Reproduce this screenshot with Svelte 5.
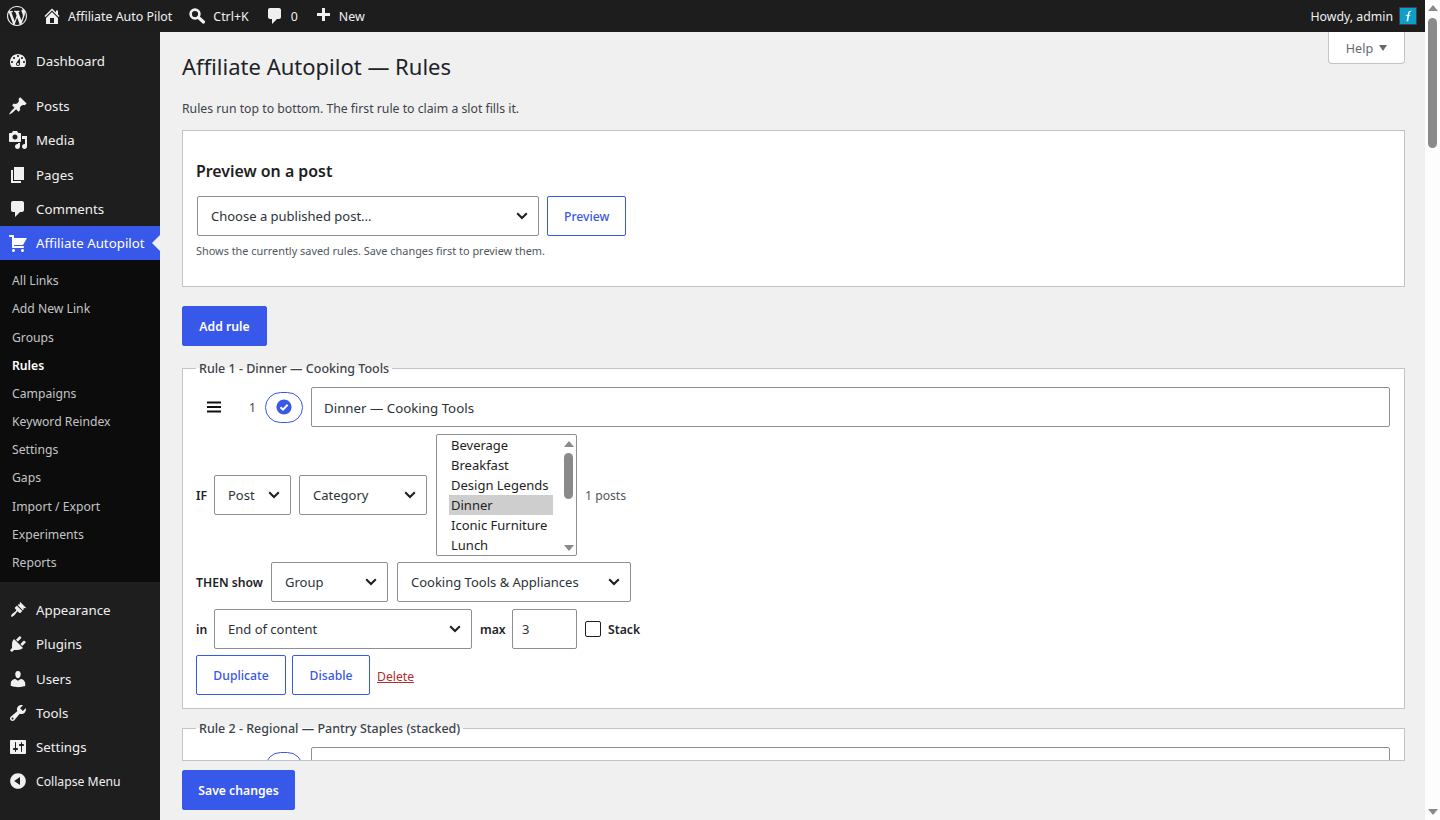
<script lang="ts">
  const icons: Record<string, string> = {
    dashboard: 'M3.76 16h12.48c1.1-1.37 1.76-3.11 1.76-5 0-4.42-3.58-8-8-8s-8 3.58-8 8c0 1.89.66 3.63 1.76 5zM10 4c.55 0 1 .45 1 1s-.45 1-1 1-1-.45-1-1 .45-1 1-1zM6 6c.55 0 1 .45 1 1s-.45 1-1 1-1-.45-1-1 .45-1 1-1zm8 0c.55 0 1 .45 1 1s-.45 1-1 1-1-.45-1-1 .45-1 1-1zm-5.37 5.55L12 7v6c0 1.1-.9 2-2 2s-2-.9-2-2c0-.57.24-1.08.63-1.45zM4 10c.55 0 1 .45 1 1s-.45 1-1 1-1-.45-1-1 .45-1 1-1zm12 0c.55 0 1 .45 1 1s-.45 1-1 1-1-.45-1-1 .45-1 1-1zm-5 3c0-.55-.45-1-1-1s-1 .45-1 1 .45 1 1 1 1-.45 1-1z',
    posts: 'M10.44 3.02l1.82-1.82 6.36 6.35-1.83 1.82c-1.05-.68-2.48-.57-3.41.36l-.75.75c-.92.93-1.04 2.35-.35 3.41l-1.83 1.82-2.41-2.41-2.8 2.79c-.42.42-3.38 2.71-3.8 2.29s1.86-3.39 2.28-3.81l2.79-2.79L4.1 9.36l1.83-1.82c1.05.69 2.48.57 3.4-.36l.75-.75c.93-.92 1.05-2.35.36-3.41z',
    media: 'M13 11V4c0-.55-.45-1-1-1h-1.67L9 1H5L3.67 3H2c-.55 0-1 .45-1 1v7c0 .55.45 1 1 1h10c.55 0 1-.45 1-1zM7 4.5c1.38 0 2.5 1.12 2.5 2.5S8.38 9.5 7 9.5 4.5 8.38 4.5 7 5.62 4.5 7 4.5zM14 6h5v10.5c0 1.38-1.12 2.5-2.5 2.5S14 17.88 14 16.5s1.12-2.5 2.5-2.5c.17 0 .34.02.5.05V9h-3V6zm-4 8.05V13h2v3.5c0 1.38-1.12 2.5-2.5 2.5S7 17.88 7 16.5 8.12 14 9.5 14c.17 0 .34.02.5.05z',
    pages: 'M6 15V2h10v13H6zm-1 1h8v2H3V5h2v11z',
    comment: 'M5 2h9c1.1 0 2 .9 2 2v7c0 1.1-.9 2-2 2h-2l-5 5v-5H5c-1.1 0-2-.9-2-2V4c0-1.1.9-2 2-2z',
    cart: 'M6 13h9c.55 0 1 .45 1 1s-.45 1-1 1H5c-.55 0-1-.45-1-1V4H2c-.55 0-1-.45-1-1s.45-1 1-1h3c.55 0 1 .45 1 1v2h13l-4 7H6v1zm-.5 3c.83 0 1.5.67 1.5 1.5S6.33 19 5.5 19 4 18.33 4 17.5 4.67 16 5.5 16zm9 0c.83 0 1.5.67 1.5 1.5s-.67 1.5-1.5 1.5-1.5-.67-1.5-1.5.67-1.5 1.5-1.5z',
    appearance: 'M12.2 2 18.2 8c-.9.5-1.8.3-2.6-.2.2 1 .1 1.9-.6 2.6L9.6 5c.7-.7 1.6-.8 2.6-.6-.5-.8-.7-1.6 0-2.4zM8.9 5.7l5.4 5.4-1.7 1.7c-.4.4-1 .4-1.4 0l-.9-.9c-.4-.4-1-.4-1.4 0-.6.6-1.1 1.5-1.7 2.3-.3.4-.6.8-.9 1.1-1 1-2.6 1.9-3.1 1.4s.4-2.1 1.4-3.1c.3-.3.7-.6 1.1-.9.8-.6 1.7-1.1 2.3-1.7.4-.4.4-1 0-1.4l-.9-.9c-.4-.4-.4-1 0-1.4z',
    plugins: 'M13.11 4.36L9.87 7.6 8 5.73l3.24-3.24c.35-.34 1.05-.2 1.56.32.52.51.66 1.21.31 1.55zm-8 1.77l.91-1.12 9.01 9.01-1.19.84c-.71.71-2.63 1.16-3.82 1.16H6.14L4.9 17.26c-.59.59-1.54.59-2.12 0-.59-.58-.59-1.53 0-2.12l1.24-1.24v-3.88c0-1.13.4-3.19 1.09-3.89zm7.26 3.97l3.24-3.24c.34-.35 1.04-.21 1.55.31.52.51.66 1.21.31 1.55l-3.24 3.25z',
    users: 'M10 9.25c-2.27 0-2.73-3.44-2.73-3.44C7 4.02 7.82 2 9.97 2c2.16 0 2.98 2.02 2.71 3.81 0 0-.41 3.44-2.68 3.44zm0 2.57L12.72 10c2.39 0 4.52 2.33 4.52 4.53v2.49s-3.65 1.13-7.24 1.13c-3.65 0-7.24-1.13-7.24-1.13v-2.49c0-2.25 1.94-4.48 4.47-4.48z',
    tools: 'M16.68 9.77c-1.34 1.34-3.3 1.67-4.95.99l-5.41 6.52c-.99.99-2.59.99-3.58 0s-.99-2.59 0-3.57l6.52-5.42c-.68-1.65-.35-3.61.99-4.95 1.28-1.28 3.12-1.62 4.72-1.06l-2.89 2.89 2.82 2.82 2.86-2.87c.53 1.58.18 3.39-1.08 4.65zM3.81 16.21c.4.39 1.04.39 1.43 0 .4-.4.4-1.04 0-1.43-.39-.4-1.03-.4-1.43 0-.39.39-.39 1.03 0 1.43z',
    settings: 'M18 16V4c0-.55-.45-1-1-1H3c-.55 0-1 .45-1 1v12c0 .55.45 1 1 1h14c.55 0 1-.45 1-1zM8 11h1c.55 0 1 .45 1 1s-.45 1-1 1H8v1.5c0 .28-.22.5-.5.5s-.5-.22-.5-.5V13H6c-.55 0-1-.45-1-1s.45-1 1-1h1V5.5c0-.28.22-.5.5-.5s.5.22.5.5V11zm5-2h-1c-.55 0-1-.45-1-1s.45-1 1-1h1V5.5c0-.28.22-.5.5-.5s.5.22.5.5V7h1c.55 0 1 .45 1 1s-.45 1-1 1h-1v5.5c0 .28-.22.5-.5.5s-.5-.22-.5-.5V9z',
    collapse: 'M10 2.16c4.33 0 7.84 3.51 7.84 7.84s-3.51 7.84-7.84 7.84S2.16 14.33 2.16 10 5.71 2.16 10 2.16zm2 11.72V6.12L6.18 9.97z',
    wp: 'M20 10c0-5.51-4.49-10-10-10C4.48 0 0 4.49 0 10c0 5.52 4.48 10 10 10 5.51 0 10-4.48 10-10zM7.78 15.37L4.37 6.22c.55-.02 1.17-.08 1.17-.08.5-.06.44-1.13-.06-1.11 0 0-1.45.11-2.37.11-.18 0-.37 0-.58-.01C4.12 2.69 6.87 1.11 10 1.11c2.33 0 4.45.87 6.05 2.34-.68-.11-1.65.39-1.65 1.58 0 .74.45 1.36.9 2.1.35.61.55 1.36.55 2.46 0 1.49-1.4 5-1.4 5l-3.03-8.37c.54-.02.82-.17.82-.17.5-.05.44-1.25-.06-1.22 0 0-1.44.12-2.38.12-.87 0-2.33-.12-2.33-.12-.5-.03-.56 1.2-.06 1.22l.92.08 1.26 3.41zM17.41 10c.24-.64.74-1.87.43-4.25.7 1.29 1.05 2.71 1.05 4.25 0 3.29-1.73 6.24-4.4 7.78.97-2.59 1.94-5.2 2.92-7.78zM6.1 18.09C3.12 16.65 1.11 13.53 1.11 10c0-1.3.23-2.48.72-3.59C3.25 10.3 4.67 14.2 6.1 18.09zm4.03-6.63l2.58 6.98c-.86.29-1.76.45-2.71.45-.79 0-1.57-.11-2.29-.33.81-2.38 1.62-4.74 2.42-7.1z',
    home: 'M16 8.5l1.53 1.53-1.06 1.06L10 4.62l-6.47 6.47-1.06-1.06L10 2.5l4 4v-2h2v4zm-6-2.46l6 5.99V18H4v-5.97zM12 17v-5H8v5h4z',
    plus: 'M17 7v3h-5v5H9v-5H4V7h5V2h3v5h5z'
  }

  const topMenu = [
    { label: 'Dashboard', icon: 'dashboard' }
  ]
  const contentMenu = [
    { label: 'Posts', icon: 'posts' },
    { label: 'Media', icon: 'media' },
    { label: 'Pages', icon: 'pages' },
    { label: 'Comments', icon: 'comment' }
  ]
  const subMenu = ['All Links', 'Add New Link', 'Groups', 'Rules', 'Campaigns', 'Keyword Reindex', 'Settings', 'Gaps', 'Import / Export', 'Experiments', 'Reports']
  const adminMenu = [
    { label: 'Appearance', icon: 'appearance' },
    { label: 'Plugins', icon: 'plugins' },
    { label: 'Users', icon: 'users' },
    { label: 'Tools', icon: 'tools' },
    { label: 'Settings', icon: 'settings' }
  ]
  const categories = ['Beverage', 'Breakfast', 'Design Legends', 'Dinner', 'Iconic Furniture', 'Lunch']
</script>

{#snippet icon(name: string, size = 20)}
  <svg class="icon" width={size} height={size} viewBox="0 0 20 20" aria-hidden="true"><path d={icons[name]} fill="currentColor" /></svg>
{/snippet}

{#snippet menuItem(item: { label: string, icon: string })}
  <li class="menu-item">{@render icon(item.icon)}<span>{item.label}</span></li>
{/snippet}

{#snippet chevron()}
  <svg class="chev" width="12" height="8" viewBox="0 0 12 8" aria-hidden="true"><path d="M1.2 1.2 6 6l4.8-4.8" fill="none" stroke="#1e1e1e" stroke-width="2" /></svg>
{/snippet}

<div class="page">
  <header class="adminbar">
    <div class="bar-left">
      <span class="bar-logo">{@render icon('wp', 20)}</span>
      <span class="bar-item home">{@render icon('home', 20)}Affiliate Auto Pilot</span>
      <span class="bar-item">
        <svg class="icon" width="20" height="20" viewBox="0 0 20 20" aria-hidden="true"><circle cx="8" cy="8" r="4.4" fill="none" stroke="currentColor" stroke-width="2.6" /><path d="M11.5 11.5 16.5 16" stroke="currentColor" stroke-width="3.2" stroke-linecap="round" /></svg>
        Ctrl+K
      </span>
      <span class="bar-item comments">{@render icon('comment', 20)}0</span>
      <span class="bar-item">{@render icon('plus', 20)}New</span>
    </div>
    <div class="bar-right">
      <span>Howdy, admin</span>
      <svg class="avatar" width="18" height="18" viewBox="0 0 18 18" aria-hidden="true">
        <rect x=".5" y=".5" width="17" height="17" fill="#0d9fc9" stroke="#3c434a" />
        <path d="M13 3.5 9.6 4.4 8.8 7.6 6 8.4 8.4 9 7.5 14.2 9.2 14.2 10 9 12 8.4 10.2 8 10.6 5.6z" fill="#fff" />
      </svg>
    </div>
  </header>

  <div class="body">
    <nav class="sidebar">
      <ul class="group first">
        {#each topMenu as item}{@render menuItem(item)}{/each}
      </ul>
      <ul class="group">
        {#each contentMenu as item}{@render menuItem(item)}{/each}
        <li class="menu-item current">{@render icon('cart')}<span>Affiliate Autopilot</span></li>
      </ul>
      <ul class="submenu">
        {#each subMenu as label}
          <li class:active={label === 'Rules'}>{label}</li>
        {/each}
      </ul>
      <ul class="group">
        {#each adminMenu as item}{@render menuItem(item)}{/each}
        <li class="menu-item collapse">{@render icon('collapse')}<span>Collapse Menu</span></li>
      </ul>
    </nav>

    <main class="content">
      <button class="help">Help <span class="tri"></span></button>
      <h1>Affiliate Autopilot — Rules</h1>
      <p class="lead">Rules run top to bottom. The first rule to claim a slot fills it.</p>

      <section class="card">
        <h2>Preview on a post</h2>
        <div class="row">
          <div class="select w-post-pick">Choose a published post...{@render chevron()}</div>
          <button class="btn outline">Preview</button>
        </div>
        <p class="hint">Shows the currently saved rules. Save changes first to preview them.</p>
      </section>

      <button class="btn primary add">Add rule</button>

      <div class="rules">
        <fieldset class="rule">
          <legend>Rule 1 - Dinner — Cooking Tools</legend>
          <div class="row">
            <svg class="drag" width="24" height="24" viewBox="0 0 24 24" aria-hidden="true"><path d="M5 6.5h14v2H5zM5 11h14v2H5zM5 15.5h14v2H5z" fill="#111" /></svg>
            <span class="num">1</span>
            <span class="toggle">
              <svg width="20" height="20" viewBox="0 0 20 20" aria-hidden="true"><circle cx="10" cy="10" r="7.6" fill="#3858e9" /><path d="M6.4 10.2 9 12.6 13.6 7.8" fill="none" stroke="#fff" stroke-width="2" /></svg>
            </span>
            <div class="input grow title">Dinner — Cooking Tools</div>
          </div>
          <div class="row tight">
            <span class="lbl short">IF</span>
            <div class="select w-post">Post{@render chevron()}</div>
            <div class="select w-cat">Category{@render chevron()}</div>
            <div class="multi">
              <ul>
                {#each categories as c}
                  <li class:sel={c === 'Dinner'}>{c}</li>
                {/each}
              </ul>
              <div class="sb">
                <span class="arr up"></span>
                <span class="thumb"></span>
                <span class="arr down"></span>
              </div>
            </div>
            <span class="count">1 posts</span>
          </div>
          <div class="row then">
            <span class="lbl">THEN show</span>
            <div class="select w-group">Group{@render chevron()}</div>
            <div class="select w-tools">Cooking Tools &amp; Appliances{@render chevron()}</div>
          </div>
          <div class="row tight">
            <span class="lbl short">in</span>
            <div class="select w-slot">End of content{@render chevron()}</div>
            <span class="lbl max">max</span>
            <div class="input w-max">3</div>
            <span class="check"></span>
            <span class="lbl stack">Stack</span>
          </div>
          <div class="row actions">
            <button class="btn outline dup">Duplicate</button>
            <button class="btn outline dis">Disable</button>
            <a class="delete" href="#delete">Delete</a>
          </div>
        </fieldset>

        <fieldset class="rule clipped">
          <legend>Rule 2 - Regional — Pantry Staples (stacked)</legend>
          <div class="row">
            <span class="spacer"></span>
            <span class="toggle"></span>
            <div class="input grow"></div>
          </div>
        </fieldset>
      </div>

      <button class="btn primary save">Save changes</button>
    </main>

    <div class="scrollbar">
      <span class="arr up"></span>
      <span class="thumb"></span>
      <span class="gap"></span>
      <span class="arr down"></span>
    </div>
  </div>
</div>

<style>
  :global(body) {
    margin: 0;
    overflow: hidden;
    background: #f0f0f0;
  }

  .page {
    width: 1440px;
    height: 820px;
    display: flex;
    flex-direction: column;
    overflow: hidden;
    font-family: "Noto Sans", "Open Sans", sans-serif;
    font-size: 13px;
    color: #1e1e1e;
  }

  ul {
    list-style: none;
    margin: 0;
    padding: 0;
  }

  button {
    font: inherit;
  }

  /* admin bar */
  .adminbar {
    height: 32px;
    flex: none;
    display: flex;
    justify-content: space-between;
    align-items: center;
    background: #1d1d1d;
    color: #f0f0f1;
    font-size: 12.4px;
    padding-right: 23px;
  }

  .bar-left {
    display: flex;
    align-items: center;
    padding-left: 7px;
  }

  .bar-logo {
    display: flex;
    width: 35px;
  }

  .bar-item {
    display: flex;
    align-items: center;
    gap: 6px;
    margin-right: 16px;
  }

  .bar-item.home, .bar-item.comments {
    margin-right: 15px;
  }

  .bar-right {
    display: flex;
    align-items: center;
    gap: 6px;
    font-size: 12.3px;
  }

  .avatar {
    display: block;
  }

  .icon {
    flex: none;
    display: block;
  }

  .body {
    flex: 1;
    min-height: 0;
    display: flex;
  }

  /* sidebar */
  .sidebar {
    width: 160px;
    flex: none;
    background: #1e1e1e;
    color: #f0f0f1;
    font-size: 13.3px;
    padding-top: 12px;
  }

  .group {
    margin-top: 11px;
  }

  .group.first {
    margin-top: 0;
  }

  .menu-item {
    height: 34.2px;
    display: flex;
    align-items: center;
    gap: 8px;
    padding-left: 8px;
    box-sizing: border-box;
    position: relative;
  }

  .menu-item.collapse {
    font-size: 12.2px;
  }

  .menu-item.current {
    background: #3858e9;
    color: #fff;
  }

  .menu-item.current::after {
    content: '';
    position: absolute;
    right: 0;
    top: 50%;
    margin-top: -8px;
    border: 8px solid transparent;
    border-right-color: #f0f0f0;
    border-left-width: 0;
  }

  .submenu {
    background: #0c0c0c;
    padding: 7px 0 5px;
    color: #c3c4c7;
    font-size: 12.2px;
  }

  .submenu li {
    height: 28.2px;
    line-height: 28.2px;
    padding-left: 12px;
  }

  .submenu li.active {
    color: #fff;
    font-weight: 600;
  }

  /* content */
  .content {
    flex: 1;
    min-width: 0;
    position: relative;
    padding: 0 20px 0 22px;
  }

  .help {
    position: absolute;
    top: 0;
    right: 20px;
    width: 77px;
    height: 32px;
    background: #fff;
    border: 1px solid #c3c4c7;
    border-top: none;
    border-radius: 0 0 4px 4px;
    color: #646970;
    font-size: 12.6px;
    display: flex;
    align-items: center;
    justify-content: center;
    gap: 6px;
    padding: 1px 0 0;
  }

  .tri {
    border: 4.5px solid transparent;
    border-top: 6px solid #646970;
    border-bottom: none;
  }

  h1 {
    margin: 0;
    padding-top: 18px;
    font-size: 22px;
    font-weight: 400;
    line-height: 32px;
    color: #1d2327;
  }

  .lead {
    margin: 18px 0 0;
    line-height: 18px;
    font-size: 12.25px;
    color: #3c434a;
  }

  .card {
    margin-top: 12px;
    height: 157px;
    box-sizing: border-box;
    background: #fff;
    border: 1px solid #c3c4c7;
    padding: 28px 13px 0;
  }

  h2 {
    margin: 0 0 13px;
    font-size: 15.9px;
    font-weight: 600;
    line-height: 24px;
    color: #1e1e1e;
  }

  .row {
    display: flex;
    align-items: center;
    gap: 8px;
  }

  .hint {
    margin: 7px 0 0;
    font-size: 10.9px;
    line-height: 16px;
    color: #50575e;
  }

  .btn {
    height: 40px;
    box-sizing: border-box;
    border-radius: 2px;
    padding: 0 16px;
    font-size: 12.2px;
    font-weight: 500;
    border: 1px solid #3858e9;
    white-space: nowrap;
  }

  .btn.primary {
    background: #3858e9;
    color: #fff;
    font-weight: 600;
  }

  .btn.outline {
    background: #fff;
    color: #3858e9;
  }

  .add {
    display: block;
    width: 85px;
    padding: 0;
    margin-top: 19px;
  }

  .select, .input {
    height: 40px;
    box-sizing: border-box;
    border: 1px solid #8c8f94;
    border-radius: 2px;
    background: #fff;
    display: flex;
    align-items: center;
    padding: 0 10px 0 13px;
    font-size: 13px;
    color: #2c3338;
  }

  .select {
    justify-content: space-between;
  }

  .w-post-pick { width: 342px; margin-left: 1px; }
  .w-post { width: 77px; }
  .w-cat { width: 128px; }
  .w-group { width: 117px; }
  .w-tools { width: 234px; margin-left: 1px; }
  .w-slot { width: 258px; }
  .w-max { width: 65px; padding: 0 9px; }
  .grow { flex: 1; }

  .title {
    font-size: 13.3px;
    padding: 1px 12px 0;
  }

  .rules {
    margin-top: 14px;
  }

  .rule {
    margin: 0;
    background: #fff;
    border: 1px solid #c3c4c7;
    padding: 10px 14px 13px 13px;
    min-width: 0;
  }

  .rule + .rule {
    margin-top: 11px;
  }

  legend {
    margin-left: 0;
    padding: 0 3px;
    font-size: 12.5px;
    font-weight: 500;
    line-height: 17px;
    color: #3c434a;
  }

  .rule.clipped {
    height: 41px;
    box-sizing: border-box;
    overflow: hidden;
  }

  .spacer {
    width: 61px;
  }

  .drag {
    flex: none;
    margin-left: 6px;
  }

  .num {
    width: 23px;
    padding-left: 15px;
    font-size: 12px;
    color: #3c434a;
    box-sizing: border-box;
  }

  .toggle {
    flex: none;
    width: 38px;
    height: 31px;
    box-sizing: border-box;
    border: 1px solid #3858e9;
    border-radius: 16px;
    display: flex;
    align-items: center;
    justify-content: center;
    background: #fff;
  }

  .tight {
    margin-top: 7px;
  }

  .then {
    margin-top: 6px;
  }

  .lbl {
    font-size: 12.2px;
    font-weight: 600;
    color: #1d2327;
  }

  .lbl.short {
    width: 10px;
    white-space: nowrap;
  }

  .lbl.max {
    width: 24px;
    white-space: nowrap;
  }

  .multi {
    width: 141px;
    height: 122px;
    margin-left: 1px;
    box-sizing: border-box;
    border: 1px solid #8c8f94;
    border-radius: 2px;
    background: #fff;
    display: flex;
    padding-left: 12px;
    color: #1e1e1e;
  }

  .multi ul {
    width: 104px;
    flex: none;
  }

  .multi li {
    height: 20px;
    line-height: 20px;
    padding-left: 2px;
    font-size: 13px;
    white-space: nowrap;
  }

  .multi li.sel {
    background: #cecece;
  }

  .sb {
    flex: 1;
    display: flex;
    flex-direction: column;
    align-items: center;
    padding: 6px 0 4px 8px;
    box-sizing: border-box;
  }

  .sb .thumb {
    width: 9px;
    height: 46px;
    margin-top: 6px;
    border-radius: 5px;
    background: #8a8a8a;
  }

  .sb .down {
    margin-top: auto;
  }

  .arr {
    display: block;
    border-left: 5px solid transparent;
    border-right: 5px solid transparent;
  }

  .arr.up {
    border-bottom: 6px solid #8a8a8a;
  }

  .arr.down {
    border-top: 6px solid #8a8a8a;
  }

  .count {
    font-size: 12.2px;
    color: #50575e;
  }

  .check {
    width: 16px;
    height: 16px;
    box-sizing: border-box;
    border: 1px solid #1e1e1e;
    border-radius: 2px;
    background: #fff;
  }

  .stack {
    margin-left: -1px;
  }

  .actions {
    margin-top: 6px;
    gap: 6px;
  }

  .dup {
    width: 90px;
    padding: 0;
  }

  .dis {
    width: 78px;
    padding: 0;
  }

  .delete {
    margin: 2px 0 0 1px;
    color: #b32d2e;
    font-size: 12.2px;
  }

  .save {
    display: block;
    width: 113px;
    padding: 0;
    margin-top: 9px;
  }

  /* page scrollbar */
  .scrollbar {
    width: 15px;
    flex: none;
    margin-top: -32px;
    background: #fdfdfd;
    display: flex;
    flex-direction: column;
    align-items: center;
    padding: 5px 0;
    box-sizing: border-box;
    position: relative;
  }

  .scrollbar .thumb {
    width: 9px;
    height: 130px;
    margin-top: 7px;
    border-radius: 5px;
    background: #8a8a8a;
  }

  .scrollbar .gap {
    flex: 1;
  }
</style>
